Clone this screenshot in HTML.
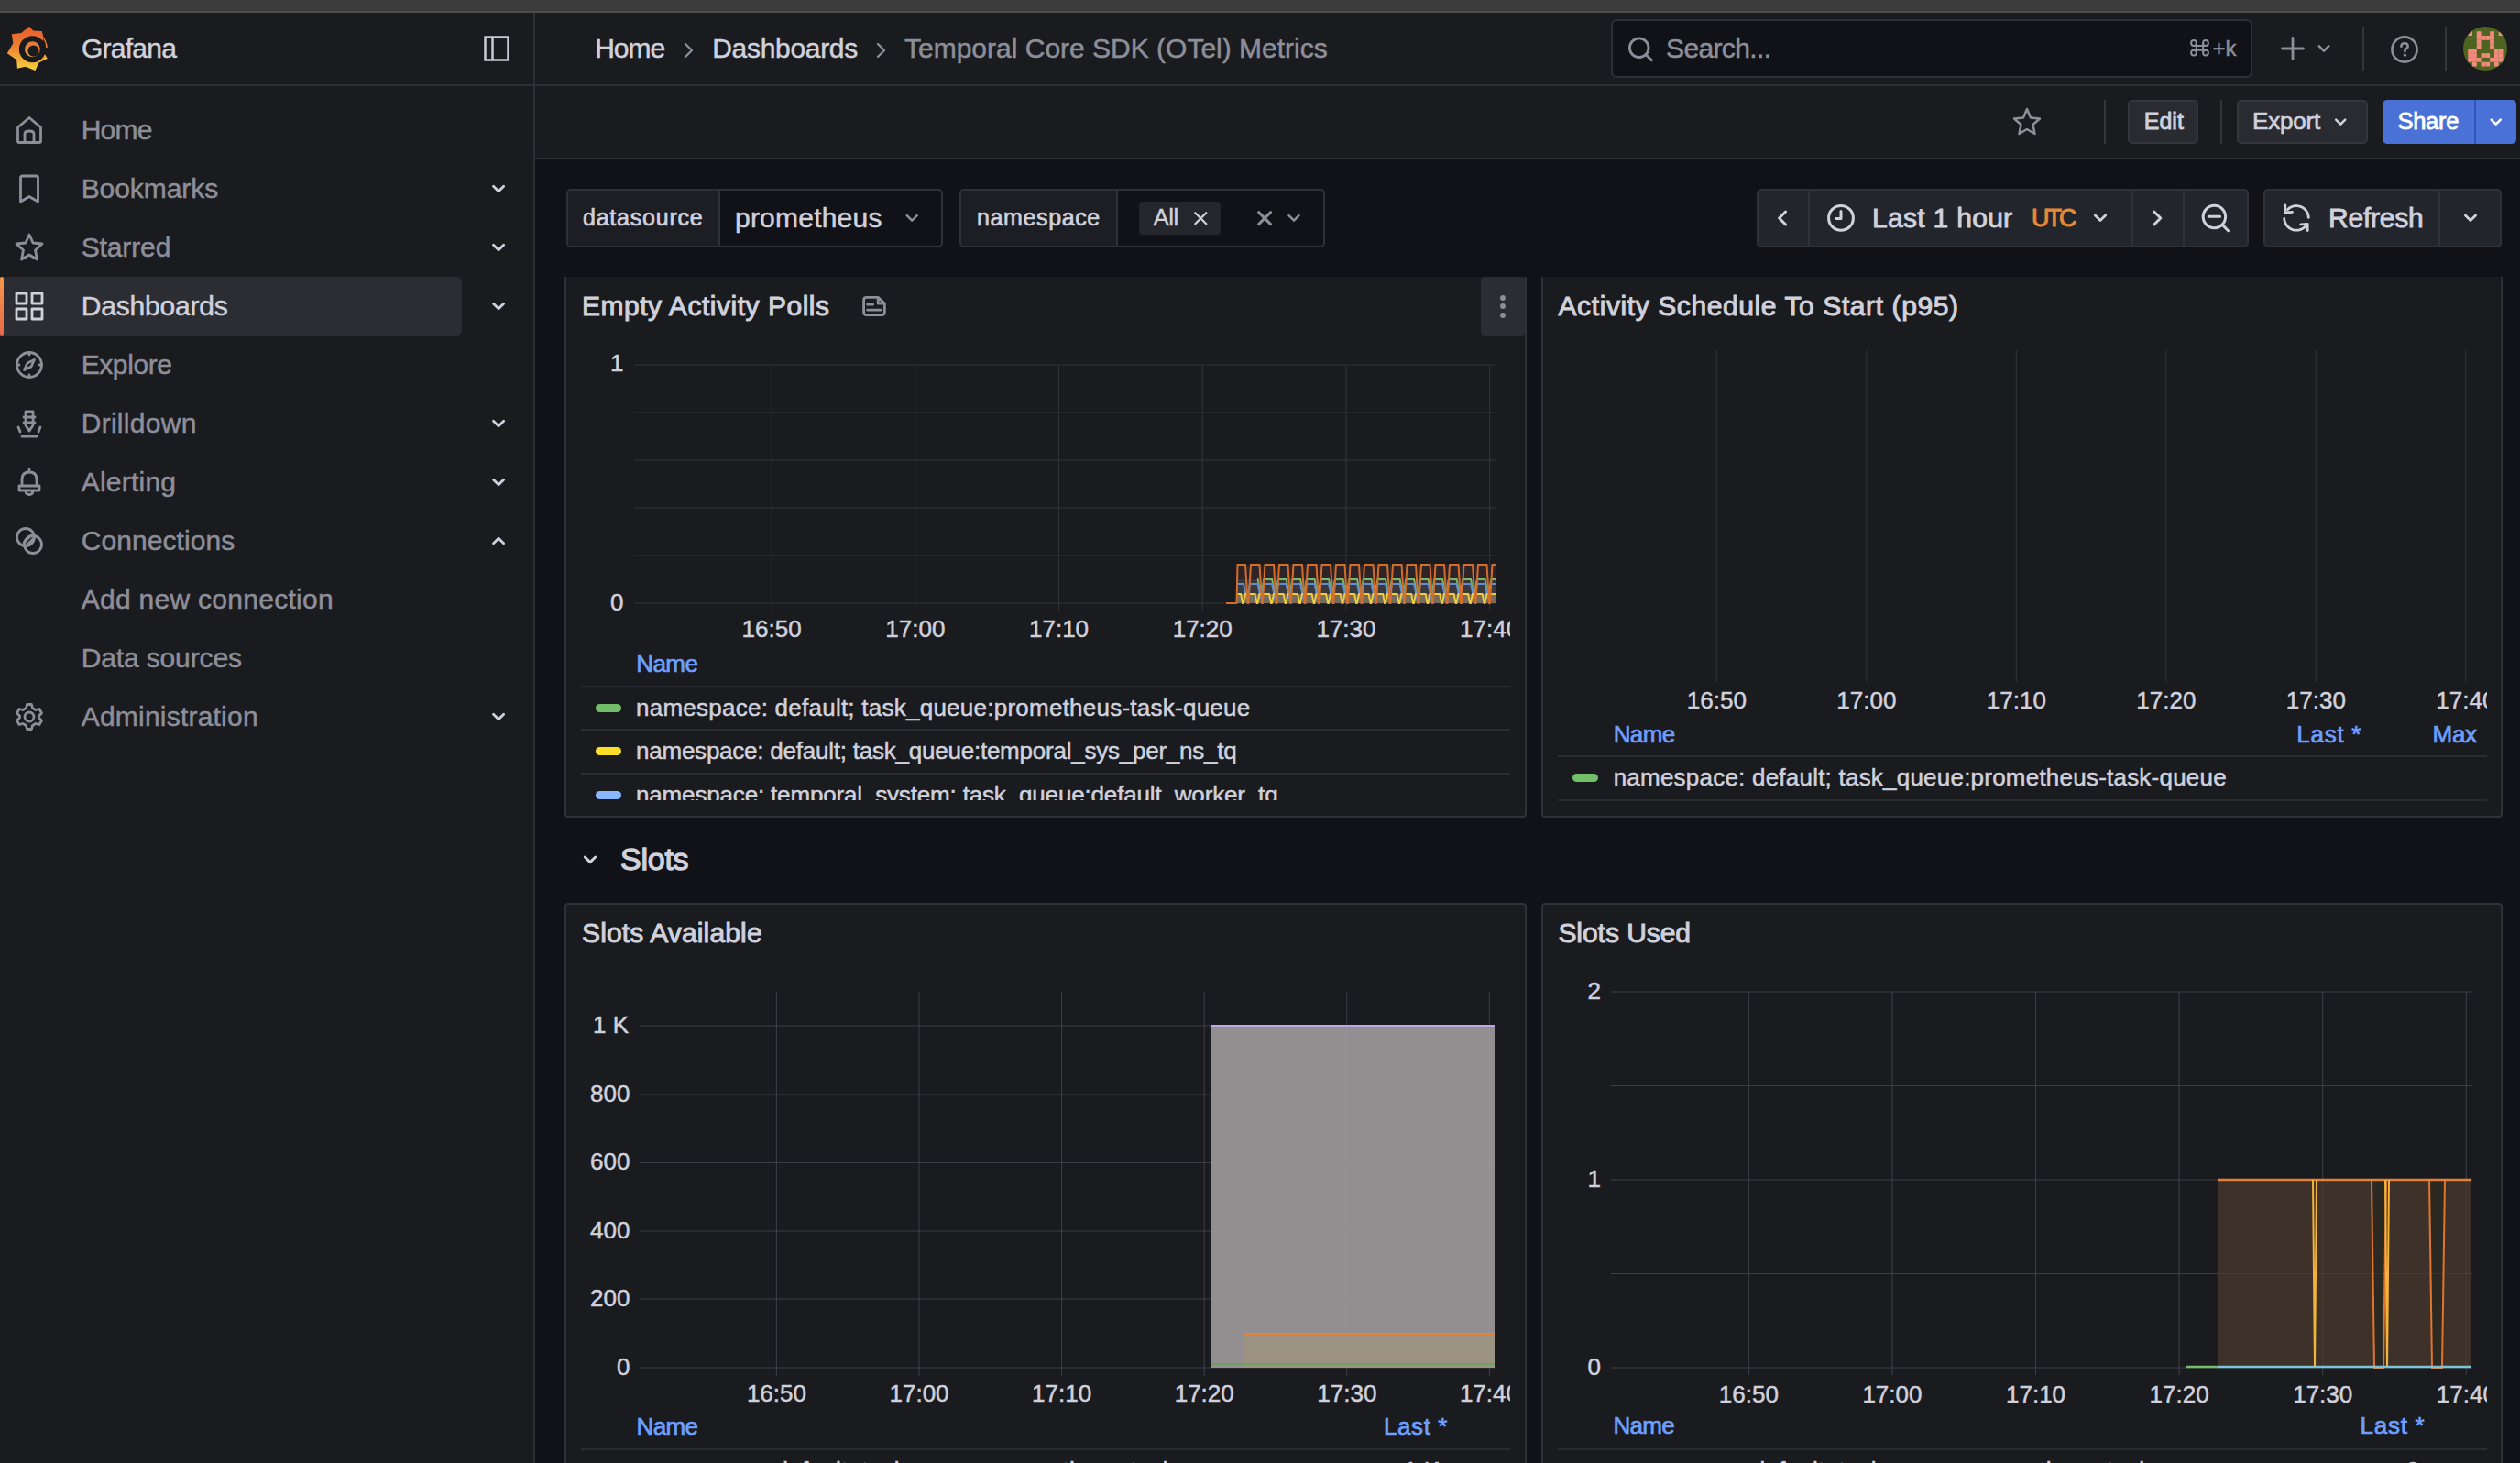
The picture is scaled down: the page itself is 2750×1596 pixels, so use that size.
<!DOCTYPE html><html><head><meta charset="utf-8"><style>
html,body{margin:0;padding:0;}
body{width:2750px;height:1596px;overflow:hidden;position:relative;background:#111217;font-family:"Liberation Sans",sans-serif;}
</style></head><body>
<div style="position:absolute;left:0px;top:0px;width:2750px;height:12px;background:#3c3c3c;"></div>
<div style="position:absolute;left:0px;top:12px;width:2750px;height:2px;background:#4b4d4d;"></div>
<div style="position:absolute;left:0px;top:14px;width:2750px;height:78px;background:#1a1b1f;"></div>
<div style="position:absolute;left:0px;top:92px;width:2750px;height:2px;background:#2e2f35;"></div>
<div style="position:absolute;left:0px;top:94px;width:582px;height:1502px;background:#1a1b1f;"></div>
<div style="position:absolute;left:582px;top:14px;width:2px;height:1582px;background:#2e2f35;"></div>
<div style="position:absolute;left:584px;top:94px;width:2166px;height:78px;background:#1a1b1f;"></div>
<div style="position:absolute;left:584px;top:172px;width:2166px;height:2px;background:#2e2f35;"></div>
<svg style="position:absolute;left:4px;top:25px;" width="56" height="56" viewBox="0 0 56 56"><defs><linearGradient id="lg" x1="0" y1="0" x2="0" y2="1"><stop offset="0" stop-color="#ea5a2c"/><stop offset="0.45" stop-color="#ec8034"/><stop offset="1" stop-color="#f6d33b"/></linearGradient></defs>
<g transform="scale(0.038278)">
<path fill="url(#lg)" d="M730,100 L845,225 L1090,235 L1130,390 Q1230,520 1250,700 L1175,720 L1165,875 L1250,1020 L1010,1130 L900,1360 L620,1250 L390,1300 L370,1050 L100,870 L270,580 L230,320 L500,290 Z"/>
<circle cx="820" cy="750" r="300" fill="none" stroke="#1a1b1f" stroke-width="160"/>
<path d="M1120,440 Q1200,560 1210,700 L1120,700 Z" fill="#1a1b1f"/>
<circle cx="850" cy="800" r="160" fill="#1a1b1f"/>
</g></svg>
<div style="position:absolute;left:89.00px;top:37.61px;font-size:30px;line-height:30px;color:#d0d1dc;font-weight:normal;letter-spacing:-0.750px;white-space:nowrap;-webkit-text-stroke:0.5px #d0d1dc;">Grafana</div>
<svg style="position:absolute;left:526px;top:37px;" width="32" height="32" viewBox="0 0 32 32"><rect x="3.5" y="3.5" width="25" height="25" fill="none" stroke="#c9cad6" stroke-width="2.5"/><line x1="11.5" y1="3.5" x2="11.5" y2="28.5" stroke="#c9cad6" stroke-width="2.5"/></svg>
<div style="position:absolute;left:0px;top:302px;width:504px;height:64px;background:#2c2d33;border-radius:0 6px 6px 0;"></div>
<div style="position:absolute;left:0px;top:302px;width:4px;height:64px;background:linear-gradient(#f6994a,#e6684a);border-radius:2px;"></div>
<div style="position:absolute;left:88.70px;top:126.61px;font-size:30px;line-height:30px;color:#8e8e99;font-weight:normal;letter-spacing:-0.767px;white-space:nowrap;-webkit-text-stroke:0.5px #8e8e99;">Home</div>
<svg style="position:absolute;left:16px;top:125.5px;" width="32" height="32" viewBox="0 0 32 32"><path fill="none" stroke="#8e8e99" stroke-width="2.8" stroke-linecap="round" stroke-linejoin="round" d="M3.5,28 L3.5,13 L16,2.5 L28.5,13 L28.5,28 Q28.5,29.5 27,29.5 L5,29.5 Q3.5,29.5 3.5,28 Z M11,29.5 L11,20 Q11,17 16,17 Q21,17 21,20 L21,29.5"/></svg>
<div style="position:absolute;left:88.70px;top:190.60px;font-size:30px;line-height:30px;color:#8e8e99;font-weight:normal;letter-spacing:-0.075px;white-space:nowrap;-webkit-text-stroke:0.5px #8e8e99;">Bookmarks</div>
<svg style="position:absolute;left:0;top:0;overflow:visible" width="1" height="1"><path d="M538.5,203.2 L544.1,208.8 L549.7,203.2" fill="none" stroke="#d0d1dc" stroke-width="2.8" stroke-linecap="round" stroke-linejoin="round"/></svg>
<svg style="position:absolute;left:16px;top:189.5px;" width="32" height="32" viewBox="0 0 32 32"><path fill="none" stroke="#8e8e99" stroke-width="2.8" stroke-linecap="round" stroke-linejoin="round" d="M6.5,30 L6.5,4 Q6.5,2 8.5,2 L23.5,2 Q25.5,2 25.5,4 L25.5,30 L16,24.5 Z"/></svg>
<div style="position:absolute;left:88.70px;top:254.60px;font-size:30px;line-height:30px;color:#8e8e99;font-weight:normal;letter-spacing:-0.117px;white-space:nowrap;-webkit-text-stroke:0.5px #8e8e99;">Starred</div>
<svg style="position:absolute;left:0;top:0;overflow:visible" width="1" height="1"><path d="M538.5,267.2 L544.1,272.8 L549.7,267.2" fill="none" stroke="#d0d1dc" stroke-width="2.8" stroke-linecap="round" stroke-linejoin="round"/></svg>
<svg style="position:absolute;left:16px;top:253.5px;" width="32" height="32" viewBox="0 0 32 32"><path fill="none" stroke="#8e8e99" stroke-width="2.8" stroke-linecap="round" stroke-linejoin="round" d="M16,2 L20,11 L30,12 L22.5,19 L24.5,29 L16,24 L7.5,29 L9.5,19 L2,12 L12,11 Z"/></svg>
<div style="position:absolute;left:88.70px;top:318.61px;font-size:30px;line-height:30px;color:#d0d1dc;font-weight:normal;letter-spacing:-0.189px;white-space:nowrap;-webkit-text-stroke:0.5px #d0d1dc;">Dashboards</div>
<svg style="position:absolute;left:0;top:0;overflow:visible" width="1" height="1"><path d="M538.5,331.2 L544.1,336.8 L549.7,331.2" fill="none" stroke="#d0d1dc" stroke-width="2.8" stroke-linecap="round" stroke-linejoin="round"/></svg>
<svg style="position:absolute;left:16px;top:317.5px;" width="32" height="32" viewBox="0 0 32 32"><rect x="2" y="2" width="11" height="11" fill="none" stroke="#d0d1dc" stroke-width="2.8" stroke-linecap="round" stroke-linejoin="round"/><rect x="19" y="2" width="11" height="11" fill="none" stroke="#d0d1dc" stroke-width="2.8" stroke-linecap="round" stroke-linejoin="round"/><rect x="2" y="19" width="11" height="11" fill="none" stroke="#d0d1dc" stroke-width="2.8" stroke-linecap="round" stroke-linejoin="round"/><rect x="19" y="19" width="11" height="11" fill="none" stroke="#d0d1dc" stroke-width="2.8" stroke-linecap="round" stroke-linejoin="round"/></svg>
<div style="position:absolute;left:88.70px;top:382.61px;font-size:30px;line-height:30px;color:#8e8e99;font-weight:normal;letter-spacing:-0.417px;white-space:nowrap;-webkit-text-stroke:0.5px #8e8e99;">Explore</div>
<svg style="position:absolute;left:16px;top:381.5px;" width="32" height="32" viewBox="0 0 32 32"><circle cx="16" cy="16" r="13.5" fill="none" stroke="#8e8e99" stroke-width="2.8" stroke-linecap="round" stroke-linejoin="round"/><path fill="none" stroke="#8e8e99" stroke-width="2.8" stroke-linecap="round" stroke-linejoin="round" d="M21.5,10.5 L18,18 L10.5,21.5 L14,14 Z"/><path fill="none" stroke="#8e8e99" stroke-width="2.8" stroke-linecap="round" stroke-linejoin="round" d="M16,2.5 L16,5 M16,27 L16,29.5 M2.5,16 L5,16 M27,16 L29.5,16"/></svg>
<div style="position:absolute;left:88.70px;top:446.61px;font-size:30px;line-height:30px;color:#8e8e99;font-weight:normal;letter-spacing:0.287px;white-space:nowrap;-webkit-text-stroke:0.5px #8e8e99;">Drilldown</div>
<svg style="position:absolute;left:0;top:0;overflow:visible" width="1" height="1"><path d="M538.5,459.2 L544.1,464.8 L549.7,459.2" fill="none" stroke="#d0d1dc" stroke-width="2.8" stroke-linecap="round" stroke-linejoin="round"/></svg>
<svg style="position:absolute;left:16px;top:445.5px;" width="32" height="32" viewBox="0 0 32 32"><path fill="none" stroke="#8e8e99" stroke-width="2.8" stroke-linecap="round" stroke-linejoin="round" d="M12,3 L20,3 L20,18 L16,24 L12,18 Z M10,9 L22,9 M10,15 L22,15 M4,20 L6,25 M28,20 L26,25 M8,30 L24,30"/></svg>
<div style="position:absolute;left:88.70px;top:510.61px;font-size:30px;line-height:30px;color:#8e8e99;font-weight:normal;letter-spacing:0.229px;white-space:nowrap;-webkit-text-stroke:0.5px #8e8e99;">Alerting</div>
<svg style="position:absolute;left:0;top:0;overflow:visible" width="1" height="1"><path d="M538.5,523.2 L544.1,528.8 L549.7,523.2" fill="none" stroke="#d0d1dc" stroke-width="2.8" stroke-linecap="round" stroke-linejoin="round"/></svg>
<svg style="position:absolute;left:16px;top:509.5px;" width="32" height="32" viewBox="0 0 32 32"><path fill="none" stroke="#8e8e99" stroke-width="2.8" stroke-linecap="round" stroke-linejoin="round" d="M16,2 L16,4.5 M8,20 L8,13 Q8,5 16,5 Q24,5 24,13 L24,20 M5,20 L27,20 L27,25 L5,25 Z M12,25 Q12,29.5 16,29.5 Q20,29.5 20,25"/></svg>
<div style="position:absolute;left:88.70px;top:574.61px;font-size:30px;line-height:30px;color:#8e8e99;font-weight:normal;letter-spacing:0.080px;white-space:nowrap;-webkit-text-stroke:0.5px #8e8e99;">Connections</div>
<svg style="position:absolute;left:0;top:0;overflow:visible" width="1" height="1"><path d="M538.5,592.8 L544.1,587.2 L549.7,592.8" fill="none" stroke="#d0d1dc" stroke-width="2.8" stroke-linecap="round" stroke-linejoin="round"/></svg>
<svg style="position:absolute;left:16px;top:573.5px;" width="32" height="32" viewBox="0 0 32 32"><circle cx="12" cy="12" r="9.5" fill="none" stroke="#8e8e99" stroke-width="2.8" stroke-linecap="round" stroke-linejoin="round"/><circle cx="20" cy="20" r="9.5" fill="none" stroke="#8e8e99" stroke-width="2.8" stroke-linecap="round" stroke-linejoin="round"/><path fill="none" stroke="#8e8e99" stroke-width="2.8" stroke-linecap="round" stroke-linejoin="round" d="M13,21 L21,13 M10,18 L18,10"/></svg>
<div style="position:absolute;left:88.70px;top:638.61px;font-size:30px;line-height:30px;color:#8e8e99;font-weight:normal;letter-spacing:0.282px;white-space:nowrap;-webkit-text-stroke:0.5px #8e8e99;">Add new connection</div>
<div style="position:absolute;left:88.70px;top:702.61px;font-size:30px;line-height:30px;color:#8e8e99;font-weight:normal;letter-spacing:-0.136px;white-space:nowrap;-webkit-text-stroke:0.5px #8e8e99;">Data sources</div>
<div style="position:absolute;left:88.70px;top:766.61px;font-size:30px;line-height:30px;color:#8e8e99;font-weight:normal;letter-spacing:0.215px;white-space:nowrap;-webkit-text-stroke:0.5px #8e8e99;">Administration</div>
<svg style="position:absolute;left:0;top:0;overflow:visible" width="1" height="1"><path d="M538.5,779.2 L544.1,784.8 L549.7,779.2" fill="none" stroke="#d0d1dc" stroke-width="2.8" stroke-linecap="round" stroke-linejoin="round"/></svg>
<svg style="position:absolute;left:16px;top:765.5px;" width="32" height="32" viewBox="0 0 32 32"><circle cx="16" cy="16" r="5" fill="none" stroke="#8e8e99" stroke-width="2.8" stroke-linecap="round" stroke-linejoin="round"/><path fill="none" stroke="#8e8e99" stroke-width="2.8" stroke-linecap="round" stroke-linejoin="round" d="M13.5,2.5 L18.5,2.5 L19.5,6.5 L23,8.5 L27,7.5 L29.5,12 L26.5,15 L26.5,17 L29.5,20 L27,24.5 L23,23.5 L19.5,25.5 L18.5,29.5 L13.5,29.5 L12.5,25.5 L9,23.5 L5,24.5 L2.5,20 L5.5,17 L5.5,15 L2.5,12 L5,7.5 L9,8.5 L12.5,6.5 Z"/></svg>
<div style="position:absolute;left:649.20px;top:37.61px;font-size:30px;line-height:30px;color:#d0d1dc;font-weight:normal;letter-spacing:-1.000px;white-space:nowrap;-webkit-text-stroke:0.5px #d0d1dc;">Home</div>
<svg style="position:absolute;left:745.5px;top:45.5px;" width="14" height="18" viewBox="0 0 14 18"><path d="M2,2 L9,9 L2,16" fill="none" stroke="#8e8e99" stroke-width="2.4" stroke-linecap="round" stroke-linejoin="round"/></svg>
<div style="position:absolute;left:777.20px;top:37.61px;font-size:30px;line-height:30px;color:#d0d1dc;font-weight:normal;letter-spacing:-0.300px;white-space:nowrap;-webkit-text-stroke:0.5px #d0d1dc;">Dashboards</div>
<svg style="position:absolute;left:956px;top:45.5px;" width="14" height="18" viewBox="0 0 14 18"><path d="M2,2 L9,9 L2,16" fill="none" stroke="#8e8e99" stroke-width="2.4" stroke-linecap="round" stroke-linejoin="round"/></svg>
<div style="position:absolute;left:987.00px;top:37.61px;font-size:30px;line-height:30px;color:#8e8e99;font-weight:normal;letter-spacing:0.000px;white-space:nowrap;-webkit-text-stroke:0.5px #8e8e99;">Temporal Core SDK (OTel) Metrics</div>
<div style="position:absolute;left:1758px;top:21px;width:700px;height:64px;background:#111217;border:2px solid #2f3035;border-radius:6px;box-sizing:border-box;"></div>
<svg style="position:absolute;left:1776px;top:39.5px;" width="32" height="32" viewBox="0 0 32 32"><circle cx="12.7" cy="12.2" r="10.3" fill="none" stroke="#8e8e99" stroke-width="2.9"/><path d="M20.3,19.8 L26.3,25.8" stroke="#8e8e99" stroke-width="2.9" stroke-linecap="round"/></svg>
<div style="position:absolute;left:1818.00px;top:38.11px;font-size:30px;line-height:30px;color:#8e8e99;font-weight:normal;letter-spacing:-0.625px;white-space:nowrap;-webkit-text-stroke:0.5px #8e8e99;">Search...</div>
<svg style="position:absolute;left:0;top:0;overflow:visible" width="1" height="1"><g fill="none" stroke="#8e8e99" stroke-width="2"><circle cx="2394" cy="47" r="2.9"/><circle cx="2407" cy="47" r="2.9"/><circle cx="2394" cy="57.6" r="2.9"/><circle cx="2407" cy="57.6" r="2.9"/><path d="M2396.9,47 L2396.9,57.6 M2404.1,47 L2404.1,57.6 M2394,49.9 L2407,49.9 M2394,54.7 L2407,54.7"/></g></svg>
<div style="position:absolute;left:2414.50px;top:40.68px;font-size:24px;line-height:24px;color:#8e8e99;font-weight:normal;letter-spacing:0.100px;white-space:nowrap;-webkit-text-stroke:0.4px #8e8e99;">+k</div>
<svg style="position:absolute;left:2488px;top:39px;" width="28" height="28" viewBox="0 0 28 28"><path d="M14,2.5 L14,25.5 M2.5,14 L25.5,14" stroke="#8e8e99" stroke-width="2.8" stroke-linecap="round"/></svg>
<svg style="position:absolute;left:0;top:0;overflow:visible" width="1" height="1"><path d="M2530.8,50.4 L2536,55.6 L2541.2,50.4" fill="none" stroke="#8e8e99" stroke-width="2.6" stroke-linecap="round" stroke-linejoin="round"/></svg>
<div style="position:absolute;left:2578px;top:29px;width:2px;height:48px;background:#34353a;"></div>
<svg style="position:absolute;left:2607px;top:36.5px;" width="34" height="34" viewBox="0 0 34 34"><circle cx="17" cy="17" r="13.6" fill="none" stroke="#8e8e99" stroke-width="2.6"/><path d="M13.4,13.8 Q13.4,10.3 17,10.3 Q20.6,10.3 20.6,13.4 Q20.6,15.6 17.4,17 L17.4,19.2" fill="none" stroke="#8e8e99" stroke-width="2.6" stroke-linecap="round"/><circle cx="17.4" cy="23.2" r="1.6" fill="#8e8e99"/></svg>
<div style="position:absolute;left:2668px;top:29px;width:2px;height:48px;background:#34353a;"></div>
<svg style="position:absolute;left:2688px;top:29px;" width="48" height="48" viewBox="0 0 48 48"><defs><clipPath id="av"><circle cx="24" cy="24" r="24"/></clipPath></defs><g clip-path="url(#av)"><rect width="48" height="48" fill="#4f6420"/><rect x="5.20" y="5.20" width="4.8" height="4.8" fill="#ef8a7c"/><rect x="14.77" y="5.20" width="4.8" height="4.8" fill="#ef8a7c"/><rect x="29.12" y="5.20" width="4.8" height="4.8" fill="#ef8a7c"/><rect x="38.70" y="5.20" width="4.8" height="4.8" fill="#ef8a7c"/><rect x="14.77" y="9.98" width="4.8" height="4.8" fill="#ef8a7c"/><rect x="19.55" y="9.98" width="4.8" height="4.8" fill="#ef8a7c"/><rect x="24.34" y="9.98" width="4.8" height="4.8" fill="#ef8a7c"/><rect x="29.12" y="9.98" width="4.8" height="4.8" fill="#ef8a7c"/><rect x="14.77" y="14.77" width="4.8" height="4.8" fill="#ef8a7c"/><rect x="29.12" y="14.77" width="4.8" height="4.8" fill="#ef8a7c"/><rect x="14.77" y="19.55" width="4.8" height="4.8" fill="#ef8a7c"/><rect x="29.12" y="19.55" width="4.8" height="4.8" fill="#ef8a7c"/><rect x="5.20" y="24.34" width="4.8" height="4.8" fill="#ef8a7c"/><rect x="9.98" y="24.34" width="4.8" height="4.8" fill="#ef8a7c"/><rect x="33.91" y="24.34" width="4.8" height="4.8" fill="#ef8a7c"/><rect x="38.70" y="24.34" width="4.8" height="4.8" fill="#ef8a7c"/><rect x="5.20" y="29.12" width="4.8" height="4.8" fill="#ef8a7c"/><rect x="9.98" y="29.12" width="4.8" height="4.8" fill="#ef8a7c"/><rect x="19.55" y="29.12" width="4.8" height="4.8" fill="#ef8a7c"/><rect x="24.34" y="29.12" width="4.8" height="4.8" fill="#ef8a7c"/><rect x="33.91" y="29.12" width="4.8" height="4.8" fill="#ef8a7c"/><rect x="38.70" y="29.12" width="4.8" height="4.8" fill="#ef8a7c"/><rect x="5.20" y="33.91" width="4.8" height="4.8" fill="#ef8a7c"/><rect x="9.98" y="33.91" width="4.8" height="4.8" fill="#ef8a7c"/><rect x="14.77" y="33.91" width="4.8" height="4.8" fill="#ef8a7c"/><rect x="29.12" y="33.91" width="4.8" height="4.8" fill="#ef8a7c"/><rect x="33.91" y="33.91" width="4.8" height="4.8" fill="#ef8a7c"/><rect x="38.70" y="33.91" width="4.8" height="4.8" fill="#ef8a7c"/><rect x="9.98" y="38.70" width="4.8" height="4.8" fill="#ef8a7c"/><rect x="19.55" y="38.70" width="4.8" height="4.8" fill="#ef8a7c"/><rect x="24.34" y="38.70" width="4.8" height="4.8" fill="#ef8a7c"/><rect x="33.91" y="38.70" width="4.8" height="4.8" fill="#ef8a7c"/></g></svg>
<svg style="position:absolute;left:2194px;top:116px;" width="36" height="34" viewBox="0 0 36 34"><path d="M18,3 L22,12.5 L32,13.5 L24.5,20 L26.5,30 L18,25 L9.5,30 L11.5,20 L4,13.5 L14,12.5 Z" fill="none" stroke="#8e8e99" stroke-width="2.5" stroke-linejoin="round"/></svg>
<div style="position:absolute;left:2296px;top:109px;width:2px;height:48px;background:#34353a;"></div>
<div style="position:absolute;left:2322px;top:109px;width:77px;height:48px;background:#2a2b30;border:2px solid #35363b;border-radius:5px;box-sizing:border-box;"></div>
<div style="position:absolute;left:2339.70px;top:119.94px;font-size:25px;line-height:25px;color:#d0d1dc;font-weight:normal;letter-spacing:0.033px;white-space:nowrap;-webkit-text-stroke:0.8px #d0d1dc;">Edit</div>
<div style="position:absolute;left:2423px;top:109px;width:2px;height:48px;background:#34353a;"></div>
<div style="position:absolute;left:2441px;top:109px;width:143px;height:48px;background:#2a2b30;border:2px solid #35363b;border-radius:5px;box-sizing:border-box;"></div>
<div style="position:absolute;left:2458.00px;top:119.09px;font-size:26px;line-height:26px;color:#d0d1dc;font-weight:normal;letter-spacing:-0.200px;white-space:nowrap;-webkit-text-stroke:0.7px #d0d1dc;">Export</div>
<svg style="position:absolute;left:0;top:0;overflow:visible" width="1" height="1"><path d="M2549.2,130.6 L2554.2,135.6 L2559.2,130.6" fill="none" stroke="#d0d1dc" stroke-width="2.6" stroke-linecap="round" stroke-linejoin="round"/></svg>
<div style="position:absolute;left:2600px;top:109px;width:146px;height:48px;background:#4a72d6;border-radius:5px;"></div>
<div style="position:absolute;left:2699.6px;top:109px;width:2.200000000000273px;height:48px;background:#2f55b5;"></div>
<div style="position:absolute;left:2616.50px;top:119.51px;font-size:25.5px;line-height:25.5px;color:#ffffff;font-weight:normal;letter-spacing:-0.300px;white-space:nowrap;-webkit-text-stroke:0.8px #ffffff;">Share</div>
<svg style="position:absolute;left:0;top:0;overflow:visible" width="1" height="1"><path d="M2718.7,130.6 L2723.7,135.6 L2728.7,130.6" fill="none" stroke="#ffffff" stroke-width="2.6" stroke-linecap="round" stroke-linejoin="round"/></svg>
<div style="position:absolute;left:618px;top:206px;width:411px;height:64px;background:#111217;border:2px solid #303136;border-radius:5px;box-sizing:border-box;"></div>
<div style="position:absolute;left:620px;top:208px;width:163.5px;height:60px;background:#1c1e23;border-radius:3px 0 0 3px;"></div>
<div style="position:absolute;left:783.5px;top:208px;width:2.0px;height:60px;background:#303136;"></div>
<div style="position:absolute;left:636.00px;top:224.84px;font-size:25px;line-height:25px;color:#d0d1dc;font-weight:normal;letter-spacing:0.778px;white-space:nowrap;-webkit-text-stroke:0.7px #d0d1dc;">datasource</div>
<div style="position:absolute;left:802.00px;top:222.60px;font-size:30px;line-height:30px;color:#d0d1dc;font-weight:normal;letter-spacing:0.222px;white-space:nowrap;-webkit-text-stroke:0.5px #d0d1dc;">prometheus</div>
<svg style="position:absolute;left:0;top:0;overflow:visible" width="1" height="1"><path d="M989.70,235.05 L995.20,240.55 L1000.70,235.05" fill="none" stroke="#8e8e99" stroke-width="2.5" stroke-linecap="round" stroke-linejoin="round"/></svg>
<div style="position:absolute;left:1047px;top:206px;width:399px;height:64px;background:#111217;border:2px solid #303136;border-radius:5px;box-sizing:border-box;"></div>
<div style="position:absolute;left:1049px;top:208px;width:169px;height:60px;background:#1c1e23;border-radius:3px 0 0 3px;"></div>
<div style="position:absolute;left:1218px;top:208px;width:2px;height:60px;background:#303136;"></div>
<div style="position:absolute;left:1066.00px;top:224.84px;font-size:25px;line-height:25px;color:#d0d1dc;font-weight:normal;letter-spacing:0.625px;white-space:nowrap;-webkit-text-stroke:0.7px #d0d1dc;">namespace</div>
<div style="position:absolute;left:1243px;top:220px;width:89px;height:36px;background:#25262b;border-radius:4px;"></div>
<div style="position:absolute;left:1258.60px;top:223.99px;font-size:26px;line-height:26px;color:#d0d1dc;font-weight:normal;letter-spacing:-0.600px;white-space:nowrap;-webkit-text-stroke:0.4px #d0d1dc;">All</div>
<svg style="position:absolute;left:0;top:0;overflow:visible" width="1" height="1"><path d="M1304.3,232.2 L1316.3,244.2 M1316.3,232.2 L1304.3,244.2" stroke="#d0d1dc" stroke-width="2.3" stroke-linecap="round"/><path d="M1373.6,231.6 L1386.6,244.6 M1386.6,231.6 L1373.6,244.6" stroke="#8e8e99" stroke-width="3" stroke-linecap="round"/></svg>
<svg style="position:absolute;left:0;top:0;overflow:visible" width="1" height="1"><path d="M1406.50,235.05 L1412.00,240.55 L1417.50,235.05" fill="none" stroke="#8e8e99" stroke-width="2.5" stroke-linecap="round" stroke-linejoin="round"/></svg>
<div style="position:absolute;left:1917px;top:206px;width:537px;height:64px;background:#22252b;border:2px solid #2f3136;border-radius:5px;box-sizing:border-box;"></div>
<div style="position:absolute;left:1972.5px;top:207px;width:2.0px;height:62px;background:#2f3136;"></div>
<div style="position:absolute;left:2325.5px;top:207px;width:2.0px;height:62px;background:#2f3136;"></div>
<div style="position:absolute;left:2382px;top:207px;width:2px;height:62px;background:#2f3136;"></div>
<svg style="position:absolute;left:0;top:0;overflow:visible" width="1" height="1"><path d="M1948.6,231 L1941.6,238 L1948.6,245" fill="none" stroke="#d0d1dc" stroke-width="3" stroke-linecap="round" stroke-linejoin="round"/><circle cx="2009" cy="237.9" r="13.4" fill="none" stroke="#d0d1dc" stroke-width="3"/><path d="M2009,230.4 L2009,238.6 L2003.4,238.6" fill="none" stroke="#d0d1dc" stroke-width="3" stroke-linecap="round" stroke-linejoin="round"/></svg>
<div style="position:absolute;left:2043.00px;top:222.60px;font-size:30px;line-height:30px;color:#d0d1dc;font-weight:normal;letter-spacing:0.300px;white-space:nowrap;-webkit-text-stroke:0.9px #d0d1dc;">Last 1 hour</div>
<div style="position:absolute;left:2217.00px;top:225.14px;font-size:27px;line-height:27px;color:#e48a38;font-weight:normal;letter-spacing:-3.000px;white-space:nowrap;-webkit-text-stroke:1.0px #e48a38;">UTC</div>
<svg style="position:absolute;left:0;top:0;overflow:visible" width="1" height="1"><path d="M2286.40,234.90 L2292.00,240.50 L2297.60,234.90" fill="none" stroke="#d0d1dc" stroke-width="2.8" stroke-linecap="round" stroke-linejoin="round"/></svg>
<svg style="position:absolute;left:0;top:0;overflow:visible" width="1" height="1"><path d="M2350.8,231 L2357.8,238 L2350.8,245" fill="none" stroke="#d0d1dc" stroke-width="3" stroke-linecap="round" stroke-linejoin="round"/><circle cx="2416.4" cy="236.5" r="12.2" fill="none" stroke="#d0d1dc" stroke-width="3"/><path d="M2410.2,236.3 L2422.6,236.3 M2425.3,245.4 L2431.6,251.7" stroke="#d0d1dc" stroke-width="3" stroke-linecap="round"/></svg>
<div style="position:absolute;left:2470px;top:206px;width:260px;height:64px;background:#22252b;border:2px solid #2f3136;border-radius:5px;box-sizing:border-box;"></div>
<div style="position:absolute;left:2660.5px;top:207px;width:2.0px;height:62px;background:#2f3136;"></div>
<svg style="position:absolute;left:2480px;top:210px;" width="60" height="60" viewBox="0 0 60 60"><path d="M16.43,18.66 L17.38,17.77 L18.40,16.98 L19.50,16.30 L20.66,15.72 L21.87,15.26 L23.12,14.92 L24.40,14.70 L25.69,14.60 L26.99,14.64 L28.27,14.80 L29.54,15.08 L30.77,15.48 L31.95,16.01 L33.08,16.64 L34.14,17.38 L35.13,18.23 L36.02,19.16 L36.83,20.18 L37.53,21.27 L38.12,22.42 L38.59,23.62 L38.95,24.87 L39.18,26.14 L39.29,27.44 M12.71,28.36 L12.82,29.67 L13.06,30.97 L13.42,32.23 L13.91,33.45 L14.52,34.62 L15.24,35.72 L16.06,36.74 L16.99,37.68 L18.00,38.52 L19.08,39.26 L20.24,39.89 L21.45,40.40 L22.71,40.79 L24.00,41.05 L25.30,41.18 L26.62,41.19 L27.93,41.06 L29.22,40.80 L30.48,40.42 L31.69,39.92 L32.85,39.30 L33.94,38.57 L34.96,37.73 L35.88,36.80" fill="none" stroke="#d0d1dc" stroke-width="2.8" stroke-linecap="round" stroke-linejoin="round"/><path d="M13.8,14 L13.8,22 L21.5,21.3 M30.6,34.9 L38.2,34.3 L38.2,41.6" fill="none" stroke="#d0d1dc" stroke-width="2.8" stroke-linecap="round" stroke-linejoin="round"/></svg>
<div style="position:absolute;left:2541.00px;top:222.60px;font-size:30px;line-height:30px;color:#d0d1dc;font-weight:normal;letter-spacing:-0.217px;white-space:nowrap;-webkit-text-stroke:0.9px #d0d1dc;">Refresh</div>
<svg style="position:absolute;left:0;top:0;overflow:visible" width="1" height="1"><path d="M2690.40,234.90 L2696.00,240.50 L2701.60,234.90" fill="none" stroke="#d0d1dc" stroke-width="2.8" stroke-linecap="round" stroke-linejoin="round"/></svg>
<div style="position:absolute;left:616px;top:302px;width:1050px;height:590px;background:#1a1b1f;border:2px solid #303137;border-radius:4px;box-sizing:border-box;border-top:none;border-radius:0 0 4px 4px;"></div>
<div style="position:absolute;left:635.00px;top:318.61px;font-size:30px;line-height:30px;color:#d0d1dc;font-weight:normal;letter-spacing:0.526px;white-space:nowrap;-webkit-text-stroke:1.0px #d0d1dc;">Empty Activity Polls</div>
<svg style="position:absolute;left:0;top:0;overflow:visible" width="1" height="1"><path d="M942.6,327.4 Q942.6,324.4 945.6,324.4 L958.2,324.4 L965.4,331 L965.4,340.6 Q965.4,343.6 962.4,343.6 L945.6,343.6 Q942.6,343.6 942.6,340.6 Z M958.2,324.4 L958.2,331 L965.4,331 M946.6,332.2 L952.6,332.2 M946.6,338.2 L961,338.2" fill="none" stroke="#8e8e99" stroke-width="2.8" stroke-linejoin="round" stroke-linecap="round"/></svg>
<div style="position:absolute;left:1616px;top:302px;width:48px;height:64px;background:#2c2d32;border-radius:4px;"></div>
<svg style="position:absolute;left:1635px;top:319.5px;" width="10" height="10" viewBox="0 0 10 10"><circle cx="5" cy="5" r="2.9" fill="#8e8e99"/></svg>
<svg style="position:absolute;left:1635px;top:329px;" width="10" height="10" viewBox="0 0 10 10"><circle cx="5" cy="5" r="2.9" fill="#8e8e99"/></svg>
<svg style="position:absolute;left:1635px;top:338.5px;" width="10" height="10" viewBox="0 0 10 10"><circle cx="5" cy="5" r="2.9" fill="#8e8e99"/></svg>
<svg style="position:absolute;left:692px;top:390px;" width="942" height="290" viewBox="0 0 942 290"><line x1="0" y1="8" x2="940" y2="8" stroke="#323338" stroke-width="1.1"/><line x1="0" y1="60" x2="940" y2="60" stroke="#323338" stroke-width="1.1"/><line x1="0" y1="112" x2="940" y2="112" stroke="#323338" stroke-width="1.1"/><line x1="0" y1="164" x2="940" y2="164" stroke="#323338" stroke-width="1.1"/><line x1="0" y1="216" x2="940" y2="216" stroke="#323338" stroke-width="1.1"/><line x1="0" y1="268" x2="940" y2="268" stroke="#323338" stroke-width="1.1"/><line x1="150.1" y1="8" x2="150.1" y2="276" stroke="#323338" stroke-width="1.1"/><line x1="306.8" y1="8" x2="306.8" y2="276" stroke="#323338" stroke-width="1.1"/><line x1="463.5" y1="8" x2="463.5" y2="276" stroke="#323338" stroke-width="1.1"/><line x1="620.2" y1="8" x2="620.2" y2="276" stroke="#323338" stroke-width="1.1"/><line x1="776.9" y1="8" x2="776.9" y2="276" stroke="#323338" stroke-width="1.1"/><line x1="933.6" y1="8" x2="933.6" y2="276" stroke="#323338" stroke-width="1.1"/></svg>
<div style="position:absolute;left:666.00px;top:383.49px;font-size:26px;line-height:26px;color:#d0d1dc;font-weight:normal;letter-spacing:0.000px;white-space:nowrap;-webkit-text-stroke:0.5px #d0d1dc;">1</div>
<div style="position:absolute;left:666.00px;top:643.69px;font-size:26px;line-height:26px;color:#d0d1dc;font-weight:normal;letter-spacing:0.000px;white-space:nowrap;-webkit-text-stroke:0.5px #d0d1dc;">0</div>
<div style="position:absolute;left:809.60px;top:672.99px;font-size:26px;line-height:26px;color:#d0d1dc;font-weight:normal;letter-spacing:0.000px;white-space:nowrap;-webkit-text-stroke:0.5px #d0d1dc;">16:50</div>
<div style="position:absolute;left:966.30px;top:672.99px;font-size:26px;line-height:26px;color:#d0d1dc;font-weight:normal;letter-spacing:0.000px;white-space:nowrap;-webkit-text-stroke:0.5px #d0d1dc;">17:00</div>
<div style="position:absolute;left:1123.00px;top:672.99px;font-size:26px;line-height:26px;color:#d0d1dc;font-weight:normal;letter-spacing:0.000px;white-space:nowrap;-webkit-text-stroke:0.5px #d0d1dc;">17:10</div>
<div style="position:absolute;left:1279.70px;top:672.99px;font-size:26px;line-height:26px;color:#d0d1dc;font-weight:normal;letter-spacing:0.000px;white-space:nowrap;-webkit-text-stroke:0.5px #d0d1dc;">17:20</div>
<div style="position:absolute;left:1436.40px;top:672.99px;font-size:26px;line-height:26px;color:#d0d1dc;font-weight:normal;letter-spacing:0.000px;white-space:nowrap;-webkit-text-stroke:0.5px #d0d1dc;">17:30</div>
<div style="position:absolute;left:1593.10px;top:672.99px;font-size:26px;line-height:26px;color:#d0d1dc;font-weight:normal;letter-spacing:0.000px;white-space:nowrap;-webkit-text-stroke:0.5px #d0d1dc;">17:40</div>
<div style="position:absolute;left:1648px;top:670px;width:15.5px;height:30px;background:#1a1b1f;"></div>
<svg style="position:absolute;left:692px;top:390px;" width="942" height="290" viewBox="0 0 942 290"><rect x="657.5" y="258" width="282.5" height="10" fill="#776b5e"/><rect x="657.5" y="247" width="282.5" height="11" fill="#3a3a3e"/><rect x="657.5" y="242" width="282.5" height="5" fill="#35363a"/><rect x="657.5" y="226" width="282.5" height="16" fill="#2e2326"/><polyline points="680.0,242.0 680.6,242.0 683.6,258.0 684.4,258.0 687.4,242.0 696.1,242.0 699.1,258.0 699.9,258.0 702.9,242.0 711.6,242.0 714.6,258.0 715.4,258.0 718.4,242.0 727.1,242.0 730.1,258.0 730.9,258.0 733.9,242.0 742.6,242.0 745.6,258.0 746.4,258.0 749.4,242.0 758.1,242.0 761.1,258.0 761.9,258.0 764.9,242.0 773.6,242.0 776.6,258.0 777.4,258.0 780.4,242.0 789.1,242.0 792.1,258.0 792.9,258.0 795.9,242.0 804.6,242.0 807.6,258.0 808.4,258.0 811.4,242.0 820.1,242.0 823.1,258.0 823.9,258.0 826.9,242.0 835.6,242.0 838.6,258.0 839.4,258.0 842.4,242.0 851.1,242.0 854.1,258.0 854.9,258.0 857.9,242.0 866.6,242.0 869.6,258.0 870.4,258.0 873.4,242.0 882.1,242.0 885.1,258.0 885.9,258.0 888.9,242.0 897.6,242.0 900.6,258.0 901.4,258.0 904.4,242.0 913.1,242.0 916.1,258.0 916.9,258.0 919.9,242.0 928.6,242.0 931.6,258.0 932.4,258.0 935.4,242.0 940.0,242.0" fill="none" stroke="#7cb86c" stroke-width="1.9"/><polyline points="657.5,247.0 665.1,247.0 668.1,262.0 668.9,262.0 671.9,247.0 680.6,247.0 683.6,262.0 684.4,262.0 687.4,247.0 696.1,247.0 699.1,262.0 699.9,262.0 702.9,247.0 711.6,247.0 714.6,262.0 715.4,262.0 718.4,247.0 727.1,247.0 730.1,262.0 730.9,262.0 733.9,247.0 742.6,247.0 745.6,262.0 746.4,262.0 749.4,247.0 758.1,247.0 761.1,262.0 761.9,262.0 764.9,247.0 773.6,247.0 776.6,262.0 777.4,262.0 780.4,247.0 789.1,247.0 792.1,262.0 792.9,262.0 795.9,247.0 804.6,247.0 807.6,262.0 808.4,262.0 811.4,247.0 820.1,247.0 823.1,262.0 823.9,262.0 826.9,247.0 835.6,247.0 838.6,262.0 839.4,262.0 842.4,247.0 851.1,247.0 854.1,262.0 854.9,262.0 857.9,247.0 866.6,247.0 869.6,262.0 870.4,262.0 873.4,247.0 882.1,247.0 885.1,262.0 885.9,262.0 888.9,247.0 897.6,247.0 900.6,262.0 901.4,262.0 904.4,247.0 913.1,247.0 916.1,262.0 916.9,262.0 919.9,247.0 928.6,247.0 931.6,262.0 932.4,262.0 935.4,247.0 940.0,247.0" fill="none" stroke="#5f8fd0" stroke-width="1.9"/><polyline points="657.5,258.0 662.1,258.0 664.1,268.0 664.9,268.0 666.9,258.0 677.6,258.0 679.6,268.0 680.4,268.0 682.4,258.0 693.1,258.0 695.1,268.0 695.9,268.0 697.9,258.0 708.6,258.0 710.6,268.0 711.4,268.0 713.4,258.0 724.1,258.0 726.1,268.0 726.9,268.0 728.9,258.0 739.6,258.0 741.6,268.0 742.4,268.0 744.4,258.0 755.1,258.0 757.1,268.0 757.9,268.0 759.9,258.0 770.6,258.0 772.6,268.0 773.4,268.0 775.4,258.0 786.1,258.0 788.1,268.0 788.9,268.0 790.9,258.0 801.6,258.0 803.6,268.0 804.4,268.0 806.4,258.0 817.1,258.0 819.1,268.0 819.9,268.0 821.9,258.0 832.6,258.0 834.6,268.0 835.4,268.0 837.4,258.0 848.1,258.0 850.1,268.0 850.9,268.0 852.9,258.0 863.6,258.0 865.6,268.0 866.4,268.0 868.4,258.0 879.1,258.0 881.1,268.0 881.9,268.0 883.9,258.0 894.6,258.0 896.6,268.0 897.4,268.0 899.4,258.0 910.1,258.0 912.1,268.0 912.9,268.0 914.9,258.0 925.6,258.0 927.6,268.0 928.4,268.0 930.4,258.0 940.0,258.0" fill="none" stroke="#ecce3e" stroke-width="1.9"/><polyline points="646,268 657.5,268 658.5,226.0 667.0,226.0 669.6,268.0 670.4,268.0 673.0,226.0 682.5,226.0 685.1,268.0 685.9,268.0 688.5,226.0 698.0,226.0 700.6,268.0 701.4,268.0 704.0,226.0 713.5,226.0 716.1,268.0 716.9,268.0 719.5,226.0 729.0,226.0 731.6,268.0 732.4,268.0 735.0,226.0 744.5,226.0 747.1,268.0 747.9,268.0 750.5,226.0 760.0,226.0 762.6,268.0 763.4,268.0 766.0,226.0 775.5,226.0 778.1,268.0 778.9,268.0 781.5,226.0 791.0,226.0 793.6,268.0 794.4,268.0 797.0,226.0 806.5,226.0 809.1,268.0 809.9,268.0 812.5,226.0 822.0,226.0 824.6,268.0 825.4,268.0 828.0,226.0 837.5,226.0 840.1,268.0 840.9,268.0 843.5,226.0 853.0,226.0 855.6,268.0 856.4,268.0 859.0,226.0 868.5,226.0 871.1,268.0 871.9,268.0 874.5,226.0 884.0,226.0 886.6,268.0 887.4,268.0 890.0,226.0 899.5,226.0 902.1,268.0 902.9,268.0 905.5,226.0 915.0,226.0 917.6,268.0 918.4,268.0 921.0,226.0 930.5,226.0 933.1,268.0 933.9,268.0 936.5,226.0 940.0,226.0" fill="none" stroke="#d36d2a" stroke-width="2"/></svg>
<div style="position:absolute;left:694.20px;top:710.99px;font-size:26px;line-height:26px;color:#6e9fff;font-weight:normal;letter-spacing:-0.533px;white-space:nowrap;-webkit-text-stroke:0.7px #6e9fff;">Name</div>
<div style="position:absolute;left:634px;top:748px;width:1014px;height:2px;background:#2b2c31;"></div>
<div style="position:absolute;left:634px;top:795px;width:1014px;height:2px;background:#2b2c31;"></div>
<div style="position:absolute;left:634px;top:842.5px;width:1014px;height:2.0px;background:#2b2c31;"></div>
<div style="position:absolute;left:650px;top:768.0px;width:28px;height:9.0px;background:#73bf69;border-radius:5px;"></div>
<div style="position:absolute;left:694.00px;top:758.99px;font-size:26px;line-height:26px;color:#d0d1dc;font-weight:normal;letter-spacing:0.247px;white-space:nowrap;-webkit-text-stroke:0.5px #d0d1dc;">namespace: default; task_queue:prometheus-task-queue</div>
<div style="position:absolute;left:650px;top:815.3px;width:28px;height:9.0px;background:#fade2a;border-radius:5px;"></div>
<div style="position:absolute;left:694.00px;top:806.29px;font-size:26px;line-height:26px;color:#d0d1dc;font-weight:normal;letter-spacing:-0.231px;white-space:nowrap;-webkit-text-stroke:0.5px #d0d1dc;">namespace: default; task_queue:temporal_sys_per_ns_tq</div>
<div style="position:absolute;left:650px;top:862.6px;width:28px;height:9.0px;background:#8ab8ff;border-radius:5px;"></div>
<div style="position:absolute;left:694.00px;top:853.59px;font-size:26px;line-height:26px;color:#d0d1dc;font-weight:normal;letter-spacing:-0.164px;white-space:nowrap;-webkit-text-stroke:0.5px #d0d1dc;">namespace: temporal_system; task_queue:default_worker_tq</div>
<div style="position:absolute;left:620px;top:873px;width:1042px;height:16px;background:#1a1b1f;"></div>
<div style="position:absolute;left:1682px;top:302px;width:1049px;height:590px;background:#1a1b1f;border:2px solid #303137;border-radius:4px;box-sizing:border-box;border-top:none;border-radius:0 0 4px 4px;"></div>
<div style="position:absolute;left:1700.50px;top:318.61px;font-size:30px;line-height:30px;color:#d0d1dc;font-weight:normal;letter-spacing:0.597px;white-space:nowrap;-webkit-text-stroke:1.0px #d0d1dc;">Activity Schedule To Start (p95)</div>
<svg style="position:absolute;left:1683px;top:302px;" width="1048" height="460" viewBox="0 0 1048 460"><line x1="190.3" y1="80" x2="190.3" y2="442" stroke="#323338" stroke-width="1.1"/><line x1="353.8" y1="80" x2="353.8" y2="442" stroke="#323338" stroke-width="1.1"/><line x1="517.3" y1="80" x2="517.3" y2="442" stroke="#323338" stroke-width="1.1"/><line x1="680.8" y1="80" x2="680.8" y2="442" stroke="#323338" stroke-width="1.1"/><line x1="844.3" y1="80" x2="844.3" y2="442" stroke="#323338" stroke-width="1.1"/><line x1="1007.8" y1="80" x2="1007.8" y2="442" stroke="#323338" stroke-width="1.1"/></svg>
<div style="position:absolute;left:1840.80px;top:750.99px;font-size:26px;line-height:26px;color:#d0d1dc;font-weight:normal;letter-spacing:0.000px;white-space:nowrap;-webkit-text-stroke:0.5px #d0d1dc;">16:50</div>
<div style="position:absolute;left:2004.30px;top:750.99px;font-size:26px;line-height:26px;color:#d0d1dc;font-weight:normal;letter-spacing:0.000px;white-space:nowrap;-webkit-text-stroke:0.5px #d0d1dc;">17:00</div>
<div style="position:absolute;left:2167.80px;top:750.99px;font-size:26px;line-height:26px;color:#d0d1dc;font-weight:normal;letter-spacing:0.000px;white-space:nowrap;-webkit-text-stroke:0.5px #d0d1dc;">17:10</div>
<div style="position:absolute;left:2331.30px;top:750.99px;font-size:26px;line-height:26px;color:#d0d1dc;font-weight:normal;letter-spacing:0.000px;white-space:nowrap;-webkit-text-stroke:0.5px #d0d1dc;">17:20</div>
<div style="position:absolute;left:2494.80px;top:750.99px;font-size:26px;line-height:26px;color:#d0d1dc;font-weight:normal;letter-spacing:0.000px;white-space:nowrap;-webkit-text-stroke:0.5px #d0d1dc;">17:30</div>
<div style="position:absolute;left:2658.30px;top:750.99px;font-size:26px;line-height:26px;color:#d0d1dc;font-weight:normal;letter-spacing:0.000px;white-space:nowrap;-webkit-text-stroke:0.5px #d0d1dc;">17:40</div>
<div style="position:absolute;left:2714px;top:740px;width:14.5px;height:50px;background:#1a1b1f;"></div>
<div style="position:absolute;left:1760.70px;top:787.99px;font-size:26px;line-height:26px;color:#6e9fff;font-weight:normal;letter-spacing:-0.633px;white-space:nowrap;-webkit-text-stroke:0.7px #6e9fff;">Name</div>
<div style="position:absolute;left:2506.30px;top:787.99px;font-size:26px;line-height:26px;color:#6e9fff;font-weight:normal;letter-spacing:0.740px;white-space:nowrap;-webkit-text-stroke:0.7px #6e9fff;">Last *</div>
<div style="position:absolute;left:2654.50px;top:787.99px;font-size:26px;line-height:26px;color:#6e9fff;font-weight:normal;letter-spacing:-0.250px;white-space:nowrap;-webkit-text-stroke:0.7px #6e9fff;">Max</div>
<div style="position:absolute;left:1700px;top:824px;width:1014px;height:2px;background:#2b2c31;"></div>
<div style="position:absolute;left:1700px;top:872px;width:1014px;height:2px;background:#2b2c31;"></div>
<div style="position:absolute;left:1716px;top:844px;width:28px;height:9px;background:#73bf69;border-radius:5px;"></div>
<div style="position:absolute;left:1760.70px;top:835.39px;font-size:26px;line-height:26px;color:#d0d1dc;font-weight:normal;letter-spacing:0.222px;white-space:nowrap;-webkit-text-stroke:0.5px #d0d1dc;">namespace: default; task_queue:prometheus-task-queue</div>
<svg style="position:absolute;left:0;top:0;overflow:visible" width="1" height="1"><path d="M638.30,935.00 L644.00,940.60 L649.70,935.00" fill="none" stroke="#d0d1dc" stroke-width="3" stroke-linecap="round" stroke-linejoin="round"/></svg>
<div style="position:absolute;left:677.00px;top:920.22px;font-size:34px;line-height:34px;color:#d0d1dc;font-weight:normal;letter-spacing:-0.250px;white-space:nowrap;-webkit-text-stroke:1.3px #d0d1dc;">Slots</div>
<div style="position:absolute;left:616px;top:985px;width:1050px;height:635px;background:#1a1b1f;border:2px solid #303137;border-radius:4px;box-sizing:border-box;"></div>
<div style="position:absolute;left:635.00px;top:1003.01px;font-size:30px;line-height:30px;color:#d0d1dc;font-weight:normal;letter-spacing:0.143px;white-space:nowrap;-webkit-text-stroke:1.0px #d0d1dc;">Slots Available</div>
<svg style="position:absolute;left:698px;top:1075px;" width="935" height="430" viewBox="0 0 935 430"><line x1="0" y1="44" x2="933" y2="44" stroke="#323338" stroke-width="1.1"/><line x1="0" y1="119" x2="933" y2="119" stroke="#323338" stroke-width="1.1"/><line x1="0" y1="193.5" x2="933" y2="193.5" stroke="#323338" stroke-width="1.1"/><line x1="0" y1="268" x2="933" y2="268" stroke="#323338" stroke-width="1.1"/><line x1="0" y1="342" x2="933" y2="342" stroke="#323338" stroke-width="1.1"/><line x1="0" y1="417" x2="933" y2="417" stroke="#323338" stroke-width="1.1"/><line x1="149.4" y1="7" x2="149.4" y2="426" stroke="#323338" stroke-width="1.1"/><line x1="305.0" y1="7" x2="305.0" y2="426" stroke="#323338" stroke-width="1.1"/><line x1="460.6" y1="7" x2="460.6" y2="426" stroke="#323338" stroke-width="1.1"/><line x1="616.2" y1="7" x2="616.2" y2="426" stroke="#323338" stroke-width="1.1"/><line x1="771.8" y1="7" x2="771.8" y2="426" stroke="#323338" stroke-width="1.1"/><line x1="927.4" y1="7" x2="927.4" y2="426" stroke="#323338" stroke-width="1.1"/><rect x="624" y="43" width="309" height="374" fill="#938f90"/><rect x="658" y="380" width="275" height="37" fill="#9b9281"/><line x1="0" y1="44" x2="933" y2="44" stroke="rgba(204,204,220,0.07)" stroke-width="1.1"/><line x1="0" y1="119" x2="933" y2="119" stroke="rgba(204,204,220,0.07)" stroke-width="1.1"/><line x1="0" y1="193.5" x2="933" y2="193.5" stroke="rgba(204,204,220,0.07)" stroke-width="1.1"/><line x1="0" y1="268" x2="933" y2="268" stroke="rgba(204,204,220,0.07)" stroke-width="1.1"/><line x1="0" y1="342" x2="933" y2="342" stroke="rgba(204,204,220,0.07)" stroke-width="1.1"/><line x1="0" y1="417" x2="933" y2="417" stroke="rgba(204,204,220,0.07)" stroke-width="1.1"/><line x1="149.4" y1="7" x2="149.4" y2="426" stroke="rgba(204,204,220,0.07)" stroke-width="1.1"/><line x1="305.0" y1="7" x2="305.0" y2="426" stroke="rgba(204,204,220,0.07)" stroke-width="1.1"/><line x1="460.6" y1="7" x2="460.6" y2="426" stroke="rgba(204,204,220,0.07)" stroke-width="1.1"/><line x1="616.2" y1="7" x2="616.2" y2="426" stroke="rgba(204,204,220,0.07)" stroke-width="1.1"/><line x1="771.8" y1="7" x2="771.8" y2="426" stroke="rgba(204,204,220,0.07)" stroke-width="1.1"/><line x1="927.4" y1="7" x2="927.4" y2="426" stroke="rgba(204,204,220,0.07)" stroke-width="1.1"/><line x1="624" y1="44" x2="933" y2="44" stroke="#bba6ea" stroke-width="2.2"/><line x1="658" y1="380" x2="933" y2="380" stroke="#e4813a" stroke-width="2.2"/><line x1="624" y1="413" x2="933" y2="413" stroke="#6f9f5e" stroke-width="2"/></svg>
<div style="position:absolute;left:647.00px;top:1104.69px;font-size:26px;line-height:26px;color:#d0d1dc;font-weight:normal;letter-spacing:0.000px;white-space:nowrap;-webkit-text-stroke:0.5px #d0d1dc;">1 K</div>
<div style="position:absolute;left:644.00px;top:1179.69px;font-size:26px;line-height:26px;color:#d0d1dc;font-weight:normal;letter-spacing:0.000px;white-space:nowrap;-webkit-text-stroke:0.5px #d0d1dc;">800</div>
<div style="position:absolute;left:644.00px;top:1254.19px;font-size:26px;line-height:26px;color:#d0d1dc;font-weight:normal;letter-spacing:0.000px;white-space:nowrap;-webkit-text-stroke:0.5px #d0d1dc;">600</div>
<div style="position:absolute;left:644.00px;top:1328.69px;font-size:26px;line-height:26px;color:#d0d1dc;font-weight:normal;letter-spacing:0.000px;white-space:nowrap;-webkit-text-stroke:0.5px #d0d1dc;">400</div>
<div style="position:absolute;left:644.00px;top:1402.69px;font-size:26px;line-height:26px;color:#d0d1dc;font-weight:normal;letter-spacing:0.000px;white-space:nowrap;-webkit-text-stroke:0.5px #d0d1dc;">200</div>
<div style="position:absolute;left:673.00px;top:1477.69px;font-size:26px;line-height:26px;color:#d0d1dc;font-weight:normal;letter-spacing:0.000px;white-space:nowrap;-webkit-text-stroke:0.5px #d0d1dc;">0</div>
<div style="position:absolute;left:814.90px;top:1506.99px;font-size:26px;line-height:26px;color:#d0d1dc;font-weight:normal;letter-spacing:0.000px;white-space:nowrap;-webkit-text-stroke:0.5px #d0d1dc;">16:50</div>
<div style="position:absolute;left:970.50px;top:1506.99px;font-size:26px;line-height:26px;color:#d0d1dc;font-weight:normal;letter-spacing:0.000px;white-space:nowrap;-webkit-text-stroke:0.5px #d0d1dc;">17:00</div>
<div style="position:absolute;left:1126.10px;top:1506.99px;font-size:26px;line-height:26px;color:#d0d1dc;font-weight:normal;letter-spacing:0.000px;white-space:nowrap;-webkit-text-stroke:0.5px #d0d1dc;">17:10</div>
<div style="position:absolute;left:1281.70px;top:1506.99px;font-size:26px;line-height:26px;color:#d0d1dc;font-weight:normal;letter-spacing:0.000px;white-space:nowrap;-webkit-text-stroke:0.5px #d0d1dc;">17:20</div>
<div style="position:absolute;left:1437.30px;top:1506.99px;font-size:26px;line-height:26px;color:#d0d1dc;font-weight:normal;letter-spacing:0.000px;white-space:nowrap;-webkit-text-stroke:0.5px #d0d1dc;">17:30</div>
<div style="position:absolute;left:1592.90px;top:1506.99px;font-size:26px;line-height:26px;color:#d0d1dc;font-weight:normal;letter-spacing:0.000px;white-space:nowrap;-webkit-text-stroke:0.5px #d0d1dc;">17:40</div>
<div style="position:absolute;left:1648px;top:1500px;width:15.5px;height:45px;background:#1a1b1f;"></div>
<div style="position:absolute;left:694.50px;top:1542.59px;font-size:26px;line-height:26px;color:#6e9fff;font-weight:normal;letter-spacing:-0.600px;white-space:nowrap;-webkit-text-stroke:0.7px #6e9fff;">Name</div>
<div style="position:absolute;left:1510.00px;top:1542.59px;font-size:26px;line-height:26px;color:#6e9fff;font-weight:normal;letter-spacing:0.600px;white-space:nowrap;-webkit-text-stroke:0.7px #6e9fff;">Last *</div>
<div style="position:absolute;left:634px;top:1580px;width:1014px;height:2px;background:#2b2c31;"></div>
<div style="position:absolute;left:694.00px;top:1590.99px;font-size:26px;line-height:26px;color:#d0d1dc;font-weight:normal;letter-spacing:0.247px;white-space:nowrap;-webkit-text-stroke:0.5px #d0d1dc;">namespace: default; task_queue:prometheus-task-queue</div>
<div style="position:absolute;left:1532.00px;top:1590.99px;font-size:26px;line-height:26px;color:#d0d1dc;font-weight:normal;letter-spacing:0.000px;white-space:nowrap;-webkit-text-stroke:0.5px #d0d1dc;">1 K</div>
<div style="position:absolute;left:1682px;top:985px;width:1049px;height:635px;background:#1a1b1f;border:2px solid #303137;border-radius:4px;box-sizing:border-box;"></div>
<div style="position:absolute;left:1700.40px;top:1002.61px;font-size:30px;line-height:30px;color:#d0d1dc;font-weight:normal;letter-spacing:-0.044px;white-space:nowrap;-webkit-text-stroke:1.0px #d0d1dc;">Slots Used</div>
<svg style="position:absolute;left:1758px;top:1075px;" width="942" height="430" viewBox="0 0 942 430"><line x1="0" y1="7" x2="940" y2="7" stroke="#323338" stroke-width="1.1"/><line x1="0" y1="109.5" x2="940" y2="109.5" stroke="#323338" stroke-width="1.1"/><line x1="0" y1="212" x2="940" y2="212" stroke="#323338" stroke-width="1.1"/><line x1="0" y1="314.5" x2="940" y2="314.5" stroke="#323338" stroke-width="1.1"/><line x1="0" y1="417" x2="940" y2="417" stroke="#323338" stroke-width="1.1"/><line x1="150.3" y1="7" x2="150.3" y2="425" stroke="#323338" stroke-width="1.1"/><line x1="306.9" y1="7" x2="306.9" y2="425" stroke="#323338" stroke-width="1.1"/><line x1="463.5" y1="7" x2="463.5" y2="425" stroke="#323338" stroke-width="1.1"/><line x1="620.1" y1="7" x2="620.1" y2="425" stroke="#323338" stroke-width="1.1"/><line x1="776.7" y1="7" x2="776.7" y2="425" stroke="#323338" stroke-width="1.1"/><line x1="933.3" y1="7" x2="933.3" y2="425" stroke="#323338" stroke-width="1.1"/><rect x="662" y="212" width="277" height="205" fill="#3d3129"/><polygon points="830,212 846,212 844,417 832,417" fill="#2b2922"/><polyline points="830,212 833,417 843,417 846,212" fill="none" stroke="#e0752d" stroke-width="2"/><polygon points="893,212 910,212 908,417 895,417" fill="#2b2922"/><polyline points="893,212 896,417 907,417 910,212" fill="none" stroke="#e0752d" stroke-width="2"/><line x1="0" y1="7" x2="940" y2="7" stroke="rgba(204,204,220,0.07)" stroke-width="1.1"/><line x1="0" y1="109.5" x2="940" y2="109.5" stroke="rgba(204,204,220,0.07)" stroke-width="1.1"/><line x1="0" y1="212" x2="940" y2="212" stroke="rgba(204,204,220,0.07)" stroke-width="1.1"/><line x1="0" y1="314.5" x2="940" y2="314.5" stroke="rgba(204,204,220,0.07)" stroke-width="1.1"/><line x1="0" y1="417" x2="940" y2="417" stroke="rgba(204,204,220,0.07)" stroke-width="1.1"/><line x1="150.3" y1="7" x2="150.3" y2="425" stroke="rgba(204,204,220,0.07)" stroke-width="1.1"/><line x1="306.9" y1="7" x2="306.9" y2="425" stroke="rgba(204,204,220,0.07)" stroke-width="1.1"/><line x1="463.5" y1="7" x2="463.5" y2="425" stroke="rgba(204,204,220,0.07)" stroke-width="1.1"/><line x1="620.1" y1="7" x2="620.1" y2="425" stroke="rgba(204,204,220,0.07)" stroke-width="1.1"/><line x1="776.7" y1="7" x2="776.7" y2="425" stroke="rgba(204,204,220,0.07)" stroke-width="1.1"/><line x1="933.3" y1="7" x2="933.3" y2="425" stroke="rgba(204,204,220,0.07)" stroke-width="1.1"/><line x1="662" y1="212" x2="939" y2="212" stroke="#e4803a" stroke-width="2.4"/><polyline points="766,212 768,417 770,212" fill="none" stroke="#f2b53a" stroke-width="2"/><polyline points="845,212 847,417 849,212" fill="none" stroke="#f2b53a" stroke-width="2"/><line x1="628" y1="416" x2="662" y2="416" stroke="#73bf69" stroke-width="2.5"/><line x1="662" y1="416" x2="939" y2="416" stroke="#7ec4d8" stroke-width="2.5"/></svg>
<div style="position:absolute;left:1732.50px;top:1067.69px;font-size:26px;line-height:26px;color:#d0d1dc;font-weight:normal;letter-spacing:0.000px;white-space:nowrap;-webkit-text-stroke:0.5px #d0d1dc;">2</div>
<div style="position:absolute;left:1732.50px;top:1272.69px;font-size:26px;line-height:26px;color:#d0d1dc;font-weight:normal;letter-spacing:0.000px;white-space:nowrap;-webkit-text-stroke:0.5px #d0d1dc;">1</div>
<div style="position:absolute;left:1732.50px;top:1477.69px;font-size:26px;line-height:26px;color:#d0d1dc;font-weight:normal;letter-spacing:0.000px;white-space:nowrap;-webkit-text-stroke:0.5px #d0d1dc;">0</div>
<div style="position:absolute;left:1875.80px;top:1507.59px;font-size:26px;line-height:26px;color:#d0d1dc;font-weight:normal;letter-spacing:0.000px;white-space:nowrap;-webkit-text-stroke:0.5px #d0d1dc;">16:50</div>
<div style="position:absolute;left:2032.40px;top:1507.59px;font-size:26px;line-height:26px;color:#d0d1dc;font-weight:normal;letter-spacing:0.000px;white-space:nowrap;-webkit-text-stroke:0.5px #d0d1dc;">17:00</div>
<div style="position:absolute;left:2189.00px;top:1507.59px;font-size:26px;line-height:26px;color:#d0d1dc;font-weight:normal;letter-spacing:0.000px;white-space:nowrap;-webkit-text-stroke:0.5px #d0d1dc;">17:10</div>
<div style="position:absolute;left:2345.60px;top:1507.59px;font-size:26px;line-height:26px;color:#d0d1dc;font-weight:normal;letter-spacing:0.000px;white-space:nowrap;-webkit-text-stroke:0.5px #d0d1dc;">17:20</div>
<div style="position:absolute;left:2502.20px;top:1507.59px;font-size:26px;line-height:26px;color:#d0d1dc;font-weight:normal;letter-spacing:0.000px;white-space:nowrap;-webkit-text-stroke:0.5px #d0d1dc;">17:30</div>
<div style="position:absolute;left:2658.80px;top:1507.59px;font-size:26px;line-height:26px;color:#d0d1dc;font-weight:normal;letter-spacing:0.000px;white-space:nowrap;-webkit-text-stroke:0.5px #d0d1dc;">17:40</div>
<div style="position:absolute;left:2714px;top:1500px;width:14.5px;height:45px;background:#1a1b1f;"></div>
<div style="position:absolute;left:1760.40px;top:1542.29px;font-size:26px;line-height:26px;color:#6e9fff;font-weight:normal;letter-spacing:-0.667px;white-space:nowrap;-webkit-text-stroke:0.7px #6e9fff;">Name</div>
<div style="position:absolute;left:2575.60px;top:1542.29px;font-size:26px;line-height:26px;color:#6e9fff;font-weight:normal;letter-spacing:0.720px;white-space:nowrap;-webkit-text-stroke:0.7px #6e9fff;">Last *</div>
<div style="position:absolute;left:1700px;top:1580px;width:1014px;height:2px;background:#2b2c31;"></div>
<div style="position:absolute;left:1760.40px;top:1590.99px;font-size:26px;line-height:26px;color:#d0d1dc;font-weight:normal;letter-spacing:0.227px;white-space:nowrap;-webkit-text-stroke:0.5px #d0d1dc;">namespace: default; task_queue:prometheus-task-queue</div>
<div style="position:absolute;left:2626.00px;top:1590.99px;font-size:26px;line-height:26px;color:#d0d1dc;font-weight:normal;letter-spacing:0.000px;white-space:nowrap;-webkit-text-stroke:0.5px #d0d1dc;">0</div>
</body></html>
